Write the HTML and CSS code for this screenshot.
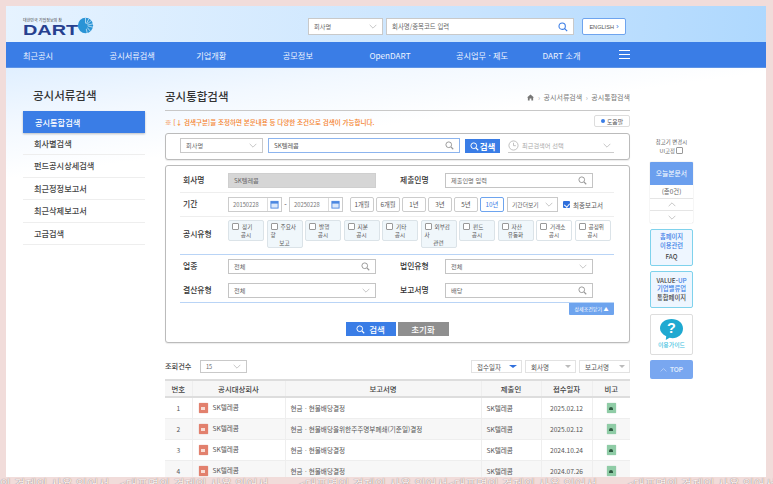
FILE: index.html
```html
<!DOCTYPE html>
<html lang="ko">
<head>
<meta charset="utf-8">
<title>공시통합검색</title>
<link rel="stylesheet" href="styles.css">
</head>
<body>
<svg class="defs" width="0" height="0">
  <symbol id="i-search" viewBox="0 0 12 12"><circle cx="5" cy="5" r="3.8" fill="none" stroke="currentColor" stroke-width="1.3"/><path d="M8 8l3 3" stroke="currentColor" stroke-width="1.5" fill="none"/></symbol>
  <symbol id="i-chev" viewBox="0 0 12 7"><path d="M1 1l5 5 5-5" fill="none" stroke="currentColor" stroke-width="1"/></symbol>
  <symbol id="i-cal" viewBox="0 0 10 10"><rect x="1" y="1.5" width="8" height="7.5" fill="#dbe8fb" stroke="#4a86e0"/><rect x="1" y="1.5" width="8" height="2.5" fill="#4a86e0"/></symbol>
</svg>
<div class="frame">
  <header class="top">
    <div class="logo">
      <div class="logo-sub">대한민국 기업정보의 창</div>
      <div class="logo-word">DART</div>
      <svg class="logo-sun" viewBox="0 0 20 20"><circle cx="10" cy="10" r="9" fill="#2a94d6"/><g stroke="#fff" stroke-width=".7"><path d="M10 10L10 1M10 10L14 2M10 10L17 4M10 10L19 8M10 10L19 12M10 10L16 17M10 10L12 19"/></g><circle cx="9" cy="11" r="3.6" fill="#2a94d6"/></svg>
    </div>
    <div class="top-tools">
      <div class="sel sel-top"><span>회사명</span><svg class="chev"><use href="#i-chev"/></svg></div>
      <div class="inp inp-top"><span>회사명/종목코드 입력</span><svg class="mag mag-blue"><use href="#i-search"/></svg></div>
      <div class="eng">ENGLISH <b>›</b></div>
    </div>
  </header>
  <nav class="nav">
    <a class="nav-item">최근공시</a>
    <a class="nav-item">공시서류검색</a>
    <a class="nav-item">기업개황</a>
    <a class="nav-item">공모정보</a>
    <a class="nav-item">OpenDART</a>
    <a class="nav-item">공시업무 · 제도</a>
    <a class="nav-item nav-last">DART 소개</a>
    <span class="burger"><i></i><i></i><i></i></span>
  </nav>
  <div class="content">
    <aside class="side">
      <h2 class="side-title">공시서류검색</h2>
      <ul class="side-menu">
        <li class="on">공시통합검색</li>
        <li>회사별검색</li>
        <li>펀드공시상세검색</li>
        <li>최근정정보고서</li>
        <li>최근삭제보고서</li>
        <li>고급검색</li>
      </ul>
    </aside>
    <main class="main">
      <div class="head">
        <h1>공시통합검색</h1>
        <div class="crumb"><svg class="home" viewBox="0 0 8 8"><path d="M4 .5L8 4H7v3.5H5V5H3v2.5H1V4H0z" fill="#777"/></svg><span class="sep">›</span>공시서류검색<span class="sep">›</span>공시통합검색</div>
      </div>
      <div class="notice-row">
        <p class="notice">※ [↓ 검색구분]을 조정하면 본문내용 등 다양한 조건으로 검색이 가능합니다.</p>
        <div class="help"><i></i>도움말</div>
      </div>
      <div class="box searchbar">
        <div class="sel sel-a"><span>회사명</span><svg class="chev"><use href="#i-chev"/></svg></div>
        <div class="inp inp-main"><span>SK텔레콤</span><svg class="mag"><use href="#i-search"/></svg></div>
        <div class="btn-search"><svg class="mag-white"><use href="#i-search"/></svg>검색</div>
        <div class="recent">
          <svg class="clock" viewBox="0 0 12 12"><circle cx="6" cy="6" r="5" fill="none" stroke="#bbb"/><path d="M6 3v3.2h2.5" fill="none" stroke="#bbb"/></svg>
          <span>최근검색어 선택</span><svg class="chev"><use href="#i-chev"/></svg>
        </div>
      </div>
      <div class="box form">
        <div class="row row-1">
          <label class="lab">회사명</label>
          <div class="inp inp-dis"><span>SK텔레콤</span></div>
          <label class="lab lab-b">제출인명</label>
          <div class="inp inp-f"><span>제출인명 입력</span><svg class="mag"><use href="#i-search"/></svg></div>
        </div>
        <div class="row row-2">
          <label class="lab">기간</label>
          <div class="date"><span>20150228</span><svg class="cal"><use href="#i-cal"/></svg></div>
          <span class="dash">-</span>
          <div class="date"><span>20250228</span><svg class="cal"><use href="#i-cal"/></svg></div>
          <div class="pers">
            <span class="per">1개월</span><span class="per">6개월</span><span class="per">1년</span><span class="per">3년</span><span class="per">5년</span><span class="per per-on">10년</span>
          </div>
          <div class="sel sel-per"><span>기간더보기</span><svg class="chev"><use href="#i-chev"/></svg></div>
          <span class="final"><i class="chk"></i>최종보고서</span>
        </div>
        <div class="row row-3">
          <label class="lab lab-type">공시유형</label>
          <div class="chips">
            <div class="chip"><div class="ll"><i class="cb"></i>정기</div><div>공시</div></div>
            <div class="chip chip-tall"><div class="ll"><i class="cb"></i>주요사</div><div class="ll">항</div><div>보고</div></div>
            <div class="chip"><div class="ll"><i class="cb"></i>발행</div><div>공시</div></div>
            <div class="chip"><div class="ll"><i class="cb"></i>지분</div><div>공시</div></div>
            <div class="chip"><div class="ll"><i class="cb"></i>기타</div><div>공시</div></div>
            <div class="chip chip-tall"><div class="ll"><i class="cb"></i>외부감</div><div class="ll">사</div><div>관련</div></div>
            <div class="chip"><div class="ll"><i class="cb"></i>펀드</div><div>공시</div></div>
            <div class="chip"><div class="ll"><i class="cb"></i>자산</div><div>유동화</div></div>
            <div class="chip chip-w"><div class="ll"><i class="cb"></i>거래소</div><div>공시</div></div>
            <div class="chip chip-w"><div class="ll"><i class="cb"></i>공정위</div><div>공시</div></div>
          </div>
        </div>
        <div class="row row-4">
          <label class="lab">업종</label>
          <div class="inp inp-f"><span>전체</span><svg class="mag"><use href="#i-search"/></svg></div>
          <label class="lab lab-b">법인유형</label>
          <div class="sel inp-f"><span>전체</span><svg class="chev"><use href="#i-chev"/></svg></div>
        </div>
        <div class="row row-5">
          <label class="lab">결산유형</label>
          <div class="sel inp-f"><span>전체</span><svg class="chev"><use href="#i-chev"/></svg></div>
          <label class="lab lab-b">보고서명</label>
          <div class="inp inp-f"><span>배당</span><svg class="mag"><use href="#i-search"/></svg></div>
        </div>
        <div class="closer"><span class="closer-btn">상세조건닫기 ▲</span></div>
        <div class="actions">
          <div class="act act-s"><svg class="mag-white"><use href="#i-search"/></svg>검색</div>
          <div class="act act-r">초기화</div>
        </div>
      </div>
      <div class="list-tools">
        <span class="cnt">조회건수</span>
        <div class="sel sel-cnt"><span>15</span><svg class="chev"><use href="#i-chev"/></svg></div>
        <div class="sorts">
          <div class="sort">접수일자<i class="tri tri-on"></i></div>
          <div class="sort">회사명<i class="tri"></i></div>
          <div class="sort">보고서명<i class="tri"></i></div>
        </div>
      </div>
      <table class="tbl">
        <colgroup><col class="c1"><col class="c2"><col class="c3"><col class="c4"><col class="c5"><col class="c6"></colgroup>
        <thead><tr><th>번호</th><th>공시대상회사</th><th>보고서명</th><th>제출인</th><th>접수일자</th><th>비고</th></tr></thead>
        <tbody>
          <tr><td class="ctr">1</td><td><i class="co"></i>SK텔레콤</td><td>현금ㆍ현물배당결정</td><td>SK텔레콤</td><td class="ctr">2025.02.12</td><td class="ctr"><i class="rm"></i></td></tr>
          <tr><td class="ctr">2</td><td><i class="co"></i>SK텔레콤</td><td>현금ㆍ현물배당을위한주주명부폐쇄(기준일)결정</td><td>SK텔레콤</td><td class="ctr">2025.02.12</td><td class="ctr"><i class="rm"></i></td></tr>
          <tr><td class="ctr">3</td><td><i class="co"></i>SK텔레콤</td><td>현금ㆍ현물배당결정</td><td>SK텔레콤</td><td class="ctr">2024.10.24</td><td class="ctr"><i class="rm"></i></td></tr>
          <tr><td class="ctr">4</td><td><i class="co"></i>SK텔레콤</td><td>현금ㆍ현물배당결정</td><td>SK텔레콤</td><td class="ctr">2024.07.26</td><td class="ctr"><i class="rm"></i></td></tr>
        </tbody>
      </table>
    </main>
    <aside class="rail">
      <div class="fix">참고기 변경시<br>UI고정 <i class="cb"></i></div>
      <div class="today">
        <div class="today-h">오늘본문서</div>
        <div class="today-c">(총0건)</div>
        <div class="today-a"><svg class="chev chev-up"><use href="#i-chev"/></svg></div>
        <div class="today-a"><svg class="chev"><use href="#i-chev"/></svg></div>
      </div>
      <div class="card card-faq"><b>홈페이지<br>이용관련</b><em>FAQ</em></div>
      <div class="card card-val"><em>VALUE-<u>UP</u></em><b>기업밸류업</b><em>통합페이지</em></div>
      <div class="guide">
        <svg class="bubble" viewBox="0 0 26 24"><path d="M13 1c7 0 12 4 12 10s-5 10-11 10c-1 0-2 0-3-.3L7 23l.5-4C3.5 17 1 14.500 1 11 1 5 6 1 13 1z" fill="#1fa9d1"/><text x="13" y="16" text-anchor="middle" class="q">?</text></svg>
        <span>이용가이드</span>
      </div>
      <div class="topbtn"><svg class="chev chev-w chev-up"><use href="#i-chev"/></svg>TOP</div>
    </aside>
  </div>
</div>
<div class="strip"><span class="cap cap-first">&lt;대표명의 경제의 사용 있어서</span><span class="cap cap-gap">&lt;대표명의 경제의 사용 있어서</span><span class="cap cap-wide">&lt;대표명의 경제의 사용 있어서</span><span class="cap">&lt;대표명의 경제의 사용 있어서</span><span class="cap cap-wide">&lt;대표명의 경제의 사용 있어서</span></div>
</body>
</html>
```
FILE: styles.css
```css
* { box-sizing: border-box; }
html, body { margin: 0; height: 484px; overflow: hidden; }
body {
  padding: 6px 0 0 6px;
  background: #f1dcda;
  font-family: "Noto Sans CJK KR", "Noto Sans", sans-serif;
  color: #333;
  font-size: 7px;
}
.defs { position: absolute; }
h1, h2, p, ul { margin: 0; padding: 0; }
ul { list-style: none; }
i, em { font-style: normal; }
.frame { width: 760px; height: 471px; overflow: hidden; background: #fff; }

/* header */
.top {
  height: 36px;
  display: flex;
  align-items: flex-start;
  padding: 12px 140px 0 17px;
  background: linear-gradient(95deg, #e6f3ff 0%, #c9e4fe 60%, #aed8fe 100%);
}
.logo { position: relative; width: 70px; height: 20px; margin-top: -1px; }
.logo-sub { font-size: 4px; line-height: 6px; color: #444; white-space: nowrap; margin-top: 0; }
.logo-word {
  font-family: "Liberation Sans", sans-serif;
  font-weight: bold;
  font-size: 14px;
  line-height: 10px;
  margin-top: 2px;
  color: #27408f;
  transform: scaleX(1.42);
  transform-origin: left;
}
.logo-sun { position: absolute; left: 54px; top: 0; width: 17px; height: 17px; }
.top-tools { margin-left: auto; display: flex; }
.sel, .inp {
  display: flex;
  align-items: center;
  justify-content: space-between;
  height: 15px;
  padding: 0 5px;
  background: #fff;
  border: 1px solid #c9c9c9;
  font-size: 6.2px;
  color: #666;
}
.chev { width: 8px; height: 5px; color: #aaa; display: block; flex: none; }
.chev-up { transform: rotate(180deg); }
.mag { width: 9px; height: 9px; color: #999; flex: none; }
.mag-blue { color: #3a7de6; width: 10px; height: 10px; }
.sel-top { width: 75px; height: 17px; }
.inp-top { width: 188px; height: 17px; margin-left: 3px; font-size: 6.4px; }
.eng {
  width: 44px; height: 17px; margin-left: 8px;
  display: flex; align-items: center; justify-content: center; gap: 2px;
  background: #fff; border: 1px solid #6ea4ee; border-radius: 2px;
  font-family: "Liberation Sans", sans-serif; font-size: 5.6px; color: #555;
}
.eng b { color: #3a7de6; font-size: 8px; font-weight: normal; line-height: 8px; }

/* nav */
.nav {
  height: 26px;
  display: flex;
  align-items: center;
  padding: 0 136px 0 17px;
  background: #3a7de6;
  border-bottom: 1px solid #5d93e6;
}
.nav-item { flex: 0 0 86.6px; color: #eef4ff; font-size: 8.2px; white-space: nowrap; }
.nav-last { flex: 1; }
.burger { width: 11px; display: flex; flex-direction: column; gap: 3.4px; }
.burger i { display: block; height: 1px; background: #fff; }

/* content */
.content {
  display: flex;
  padding: 0 0 0 17px;
  height: 409px;
  background: linear-gradient(172deg, #e0efff 0, #f2f8ff 55px, #fff 110px);
}
.side { width: 122px; flex: none; }
.side-title { font-size: 11.5px; font-weight: 500; color: #333; line-height: 16px; margin: 19px 0 8px 10px; }
.side-menu li {
  height: 22.4px; line-height: 21px; padding-left: 11px;
  font-size: 8.2px; font-weight: 500; color: #444;
  border-bottom: 1px solid #eee;
}
.side-menu li.on { height: 22px; background: #3a7de6; color: #fff; border: 0; box-shadow: 0 1px 2px rgba(0,0,0,.25); line-height: 22px; padding-left: 12px; }

.main { width: 465px; margin-left: 20px; flex: none; }
.head {
  height: 43px;
  display: flex; justify-content: space-between; align-items: flex-end;
  padding-bottom: 6px;
  border-bottom: 1px solid #c8c8c8;
}
.head h1 { font-size: 11.5px; font-weight: 500; line-height: 16px; color: #333; }
.crumb { display: flex; align-items: center; font-size: 7px; color: #777; line-height: 10px; margin-bottom: 2px; }
.home { width: 7px; height: 7px; }
.sep { margin: 0 3.5px; color: #aaa; }
.notice-row { height: 22px; display: flex; justify-content: space-between; padding-top: 4px; }
.notice { font-size: 6.5px; font-weight: 500; color: #f5802a; line-height: 14px; }
.help {
  width: 36px; height: 12px; display: flex; align-items: center; justify-content: center; gap: 2px;
  background: #fff; border: 1px solid #ddd; border-radius: 2px; font-size: 5.8px; color: #555;
}
.help i { width: 4px; height: 4px; background: #3a7de6; border-radius: 50%; }

.box { background: #fff; border: 1px solid #bbb; border-radius: 3px; box-shadow: 0 1px 1px rgba(0,0,0,.08); }
.searchbar { height: 27px; display: flex; align-items: flex-start; padding: 4px 0 0 14px; margin-bottom: 5px; }
.sel-a { width: 83px; }
.inp-main { width: 192px; margin-left: 5px; border-color: #8cb4ee; color: #555; }
.btn-search {
  width: 35px; height: 14px; margin: 1px 0 0 5px;
  display: flex; align-items: center; justify-content: center; gap: 1px;
  background: #3a7de6; color: #fff; font-size: 8.5px; font-weight: 700;
}
.mag-white { width: 9px; height: 9px; color: #fff; flex: none; }
.recent {
  width: 106px; height: 15px; margin-left: 8px;
  display: flex; align-items: center; border-bottom: 1px solid #ccc;
  font-size: 6.2px; color: #aaa;
}
.recent span { flex: 1; margin-left: 3px; }
.recent .chev { margin-right: 3px; }
.clock { width: 11px; height: 11px; }

.form { height: 178px; padding: 0 15px 0 14px; }
.row { display: flex; align-items: flex-start; padding-left: 3px; }
.lab { width: 45px; flex: none; font-size: 7.8px; font-weight: 500; color: #333; line-height: 13px; }
.lab-b { width: 45px; margin-left: 24px; }
.inp-f { width: 148px; flex: none; border-color: #c4c4c4; }
.inp-dis { width: 148px; flex: none; background: #d6d6d6; border-color: #cfcfcf; }
.row-1 { height: 27px; padding-top: 7px; border-bottom: 1px solid #eee; }
.row-2 { height: 24px; padding-top: 4px; border-bottom: 1px solid #eee; }
.row-3 { height: 38px; padding-top: 3px; border-bottom: 1px solid #b9d4f6; }
.row-4 { height: 28px; padding-top: 4px; }
.row-5 { height: 20px; border-bottom: 1px solid #b9d4f6; }
.date {
  width: 54px; height: 15px; flex: none; display: flex; align-items: center; justify-content: space-between;
  padding-left: 4px; background: #fff; border: 1px solid #ccc;
  font-size: 5.8px; color: #777;
}
.cal { width: 14px; height: 13px; padding: 0 2px; border-left: 1px solid #ddd; }
.dash { width: 7px; text-align: center; line-height: 15px; font-size: 7px; }
.pers { display: flex; gap: 2px; margin-left: 7px; }
.per {
  width: 24px; height: 15px; display: flex; align-items: center; justify-content: center;
  background: #fff; border: 1px solid #ccc; border-radius: 2px; font-size: 6.3px; color: #555;
}
.per-on { border-color: #6ea4ee; color: #3a7de6; }
.sel-per { width: 51px; margin-left: 3px; flex: none; padding: 0 4px; font-size: 5.8px; }
.final { display: flex; align-items: center; height: 15px; margin-left: 5px; font-size: 6.5px; color: #555; white-space: nowrap; }
.chk { width: 7px; height: 7px; margin-right: 3px; background: #2f6fdc; border-radius: 1px; position: relative; }
.chk::after {
  content: ""; position: absolute; left: 2.2px; top: .6px; width: 2.5px; height: 4px;
  border: solid #fff; border-width: 0 1px 1px 0; transform: rotate(40deg);
}
.lab-type { padding-top: 7px; }
.chips { display: flex; align-items: flex-start; gap: 2.5px; }
.chip {
  width: 36px; height: 21px; padding: 2px 3px 0;
  background: #f0f7fb; border: 1px solid #dbe3e8; border-radius: 2px;
  text-align: center; font-size: 5.6px; line-height: 8px; color: #555; white-space: nowrap;
}
.chip-tall { height: 28px; }
.chip-w { background: #fff; }
.ll { text-align: left; }
.cb { display: inline-block; width: 7px; height: 7px; margin-right: 3px; vertical-align: -1px; background: #fff; border: 1px solid #999; border-radius: 1px; }
.closer { display: flex; justify-content: flex-end; }
.closer-btn {
  width: 45px; height: 12px; background: #6ea4ee; color: #fff;
  font-size: 5px; line-height: 12px; text-align: center; white-space: nowrap; border-radius: 0 0 1px 1px;
}
.actions { display: flex; justify-content: center; gap: 2px; margin-top: 7px; }
.act {
  width: 50px; height: 14px; display: flex; align-items: center; justify-content: center; gap: 4px;
  font-size: 8.5px; font-weight: 500; color: #fff;
}
.act-s { background: #3a7de6; }
.act-r { background: #8f8f8f; width: 51px; }

.list-tools { height: 36px; display: flex; align-items: flex-start; padding-top: 17px; }
.cnt { width: 35px; font-size: 7.2px; line-height: 13px; font-weight: 500; color: #444; }
.sel-cnt { width: 47px; height: 13px; font-size: 5.6px; }
.sorts { margin-left: auto; display: flex; gap: 3px; }
.sort {
  width: 51px; height: 13px; display: flex; align-items: center; justify-content: space-between;
  padding: 0 4px 0 5px; background: #fff; border: 1px solid #e2e2e2;
  font-size: 6.5px; color: #555;
}
.tri { width: 0; height: 0; border: solid transparent; border-width: 3px 3px 0; border-top-color: #bbb; }
.tri-on { border-width: 3px 4px 0; border-top-color: #2f6fdc; }

.tbl { width: 465px; table-layout: fixed; border-collapse: collapse; border-top: 2px solid #ddd; font-size: 6.6px; color: #555; }
.c1 { width: 27px; } .c2 { width: 93px; } .c3 { width: 196px; }
.c4 { width: 60px; } .c5 { width: 51px; } .c6 { width: 38px; }
.tbl th {
  height: 17px; background: #f6f6f6; font-size: 7.4px; font-weight: 500; color: #444;
  border-bottom: 2px solid #ddd; border-left: 1px solid #eee; padding: 0;
}
.tbl th:first-child, .tbl td:first-child { border-left: 0; }
.tbl td { height: 21px; padding: 0 0 0 5px; border-left: 1px solid #eee; border-bottom: 1px solid #eee; white-space: nowrap; }
.tbl td:nth-child(2) { padding-left: 6px; }
.tbl td.ctr { padding: 0; text-align: center; }
.tbl tr:nth-child(even) td { background: #f7f7f7; }
.co, .rm { display: inline-block; vertical-align: middle; position: relative; }
.co { width: 9px; height: 10px; margin-right: 5px; background: #e2806d; border-radius: 1px; box-shadow: 0 0 1px #c9695a; }
.co::after { content: ""; position: absolute; left: 2.5px; top: 3.5px; width: 4px; height: 3px; background: #f8dcd4; }
.rm { width: 9px; height: 10px; background: #8fcca6; border-radius: 1px; box-shadow: 0 0 1px #6aa985; }
.rm::after { content: ""; position: absolute; left: 2.5px; top: 3.5px; width: 4px; height: 3px; background: #2f5a42; border-radius: 2px 2px 0 0; }

/* rail */
.rail { width: 43px; margin-left: 20px; flex: none; }
.fix { margin-top: 70px; height: 24px; text-align: center; font-size: 5.4px; line-height: 9px; color: #666; white-space: nowrap; }
.fix .cb { margin: 0; }
.today { background: #fff; box-shadow: 0 0 1px rgba(0,0,0,.35); border-radius: 1px; }
.today-h { height: 23px; line-height: 23px; text-align: center; background: #6b9fee; color: #fff; font-size: 6.8px; border-radius: 1px 1px 0 0; }
.today-c { height: 14px; line-height: 13px; text-align: center; font-size: 6.4px; color: #666; border-bottom: 1px solid #e5e5e5; }
.today-a { height: 12px; display: flex; align-items: center; justify-content: center; border-bottom: 1px solid #e5e5e5; }
.today-a:last-child { border: 0; }
.card {
  display: flex; flex-direction: column; justify-content: center; align-items: center;
  height: 37px; margin-top: 6px; background: #eef6ff; border: 1px solid #7fd2ec; border-radius: 2px;
  text-align: center; line-height: 8.5px; font-size: 6.3px;
}
.card b { font-weight: 500; color: #3a7de6; }
.card em { color: #444; font-weight: 500; }
.card-faq em { margin-top: 3px; }
.card-val { margin-top: 5px; }
.card-val u { text-decoration: none; color: #3a7de6; }
.guide {
  height: 41px; margin-top: 6px; display: flex; flex-direction: column; align-items: center; justify-content: flex-start;
  padding-top: 3px; background: #fff; border: 1px solid #ddd; border-radius: 2px;
  font-size: 5.9px; font-weight: 500; color: #3fbfe0; line-height: 8px;
}
.bubble { width: 25px; height: 23px; }
.q { font-family: "Liberation Sans", sans-serif; font-size: 15px; font-weight: bold; fill: #fff; }
.topbtn {
  height: 19px; margin-top: 5px; display: flex; align-items: center; justify-content: center; gap: 3px;
  background: #79a7f0; border-radius: 2px; color: #dce9fc; font-family: "Liberation Sans", sans-serif; font-size: 6.5px; font-weight: bold;
}
.chev-w { color: #dce9fc; width: 7px; height: 4px; }

/* bottom caption strip */
.strip {
  display: flex;
  margin-left: -6px;
  height: 7px; overflow: hidden;
  font-size: 12px; line-height: 14px; color: #fdf3f1;
  text-shadow: 0 0 1px #6e5d5d;
  white-space: nowrap;
}
.cap { flex: 0 0 148px; }
.cap-first { margin-left: -40px; }
.cap-gap { margin-left: 10px; }
.cap-wide { margin-left: 30px; }
```
